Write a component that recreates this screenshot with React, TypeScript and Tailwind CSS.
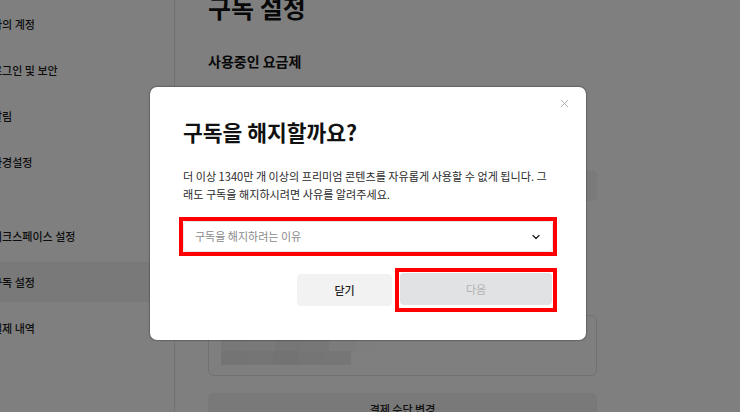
import { ChevronDown, X } from 'lucide-react'

type NavItem = {
  label: string
  active?: boolean
}

const topNav: NavItem[] = [
  { label: '나의 계정' },
  { label: '로그인 및 보안' },
  { label: '알림' },
  { label: '환경설정' },
]

const bottomNav: NavItem[] = [
  { label: '워크스페이스 설정' },
  { label: '구독 설정', active: true },
  { label: '결제 내역' },
]

// blurred (mosaic) account info in the payment card
const mosaicTop = ['#f0f0f0', '#f3f3f3', '#ececec', '#efefef', '#f9f9f9', '#fdfdfd']
const mosaicBottom = ['#e9e9e9', '#ebebeb', '#e7e7e7', '#eaeaea', '#ececec']

function SideNav({ items }: { items: NavItem[] }) {
  return (
    <div className="flex flex-col gap-[6px]">
      {items.map((item) => (
        <div
          key={item.label}
          className={`flex h-[40px] items-center ${item.active ? 'bg-[#f2f2f2]' : ''}`}
        >
          <span className="-ml-[8px] text-[11px] font-medium text-[#1a1a1a]">{item.label}</span>
        </div>
      ))}
    </div>
  )
}

function Page() {
  return (
    <div className="flex h-full">
      <aside className="w-[175px] shrink-0 border-r border-[#e2e2e2] pt-[4px]">
        <SideNav items={topNav} />
        <div className="h-[34px]" />
        <SideNav items={bottomNav} />
      </aside>

      <main className="w-[422px] pl-[33px]">
        <h1 className="-mt-[9px] text-[25px] leading-[32px] font-bold text-[#111]">구독 설정</h1>
        <h2 className="mt-[28px] text-[14px] leading-[20px] font-semibold text-[#111]">사용중인 요금제</h2>

        <div className="mt-[99px] h-[31px] rounded-[5px] bg-[#f4f4f4]" />

        <div className="mt-[114px] h-[61px] rounded-[6px] border border-[#e3e3e3] pt-[22px] pl-[12px]">
          <div className="flex h-[13px]">
            {mosaicTop.map((c, i) => (
              <div key={i} className={i === 5 ? 'w-[19px]' : 'w-[27px]'} style={{ backgroundColor: c }} />
            ))}
          </div>
          <div className="flex h-[14px]">
            {mosaicBottom.map((c, i) => (
              <div key={i} className="w-[26px]" style={{ backgroundColor: c }} />
            ))}
          </div>
        </div>

        <div className="mt-[17px] flex h-[32px] items-center justify-center rounded-[5px] bg-[#f2f2f2] text-[11px] font-medium text-[#222]">
          결제 수단 변경
        </div>
      </main>
    </div>
  )
}

function CancelDialog() {
  return (
    <div className="absolute top-[87px] left-[150px] w-[436px] rounded-[7px] bg-white px-[33px] pt-[31px] pb-[28px] shadow-[0_0_2px_rgba(0,0,0,0.7)]">
      <button className="absolute top-[10px] right-[15px] text-[#9a9a9a]">
        <X className="size-[13px]" strokeWidth={1.4} />
      </button>

      <h3 className="text-[21.5px] leading-[28px] font-bold text-[#111]">구독을 해지할까요?</h3>

      <p className="mt-[21px] text-[11.1px] leading-[18px] text-[#2a2a2a]">
        더 이상 1340만 개 이상의 프리미엄 콘텐츠를 자유롭게 사용할 수 없게 됩니다. 그래도 구독을 해지하시려면 사유를 알려주세요.
      </p>

      <div className="-mx-[4px] mt-[14px] border-4 border-[#ff0000]">
        <div className="flex h-[31px] items-center justify-between rounded-[4px] border border-[#e6e6e6] pr-[10px] pl-[11px]">
          <span className="text-[11px] text-[#8a8a8a]">구독을 해지하려는 이유</span>
          <ChevronDown className="size-[12px] text-[#1a1a1a]" strokeWidth={2.4} />
        </div>
      </div>

      <div className="-mr-[4px] mt-[12px] flex items-center justify-end gap-[3px]">
        <button className="h-[32px] w-[95px] rounded-[4px] bg-[#f2f2f2] text-[11px] font-medium text-[#222]">
          닫기
        </button>
        <div className="border-4 border-[#ff0000] p-[1px] pb-[3px]">
          <button className="h-[32px] w-[152px] rounded-[4px] bg-[#e1e2e4] text-[11px] text-[#b3b3b3]">
            다음
          </button>
        </div>
      </div>
    </div>
  )
}

export default function App() {
  return (
    <div className="relative h-[412px] w-[740px] overflow-hidden bg-white font-['Noto_Sans_CJK_KR',sans-serif]">
      <Page />
      <div className="absolute inset-0 bg-black/50" />
      <CancelDialog />
    </div>
  )
}
